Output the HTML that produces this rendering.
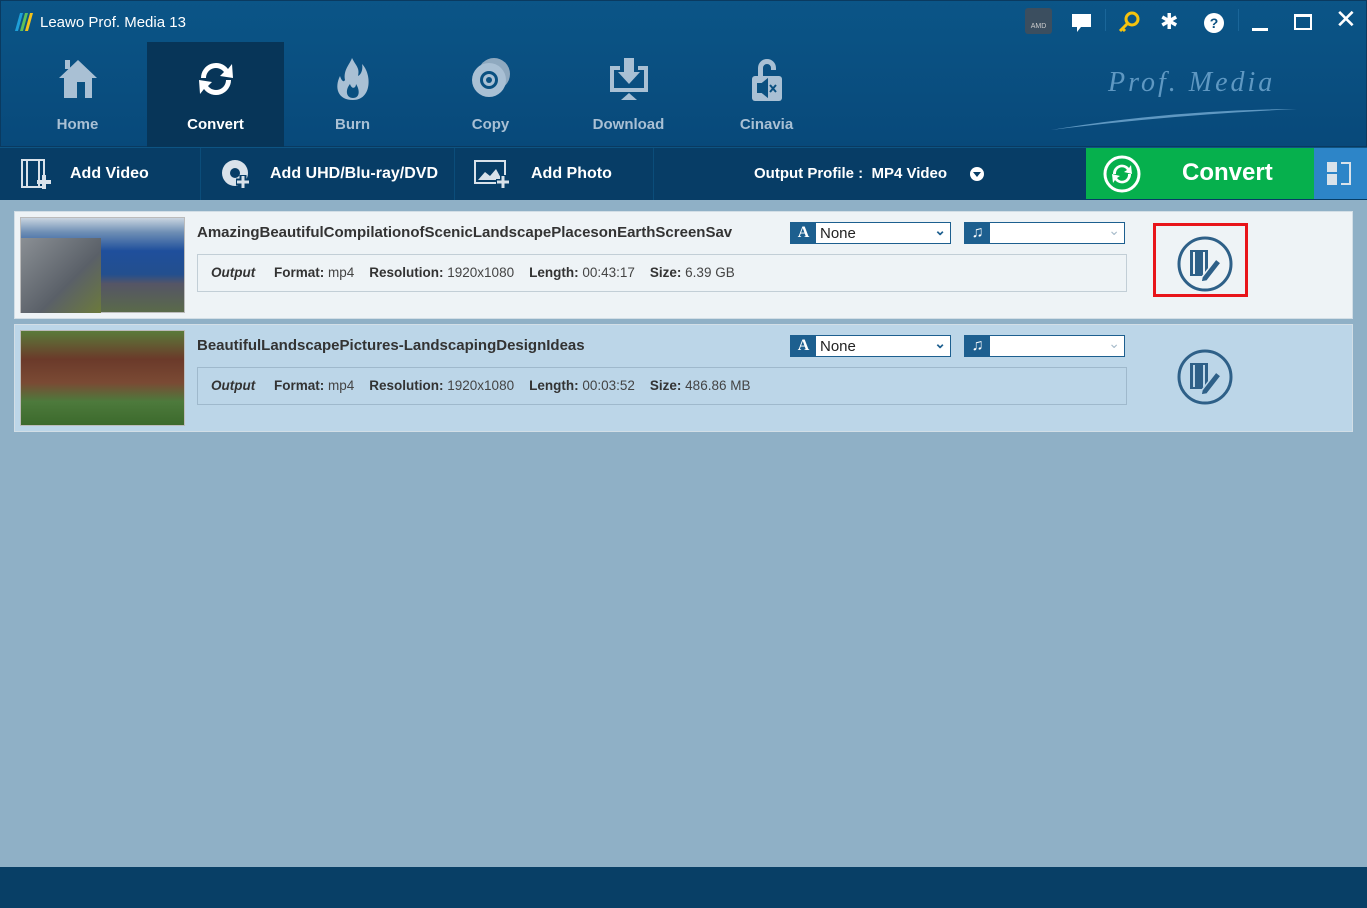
<!DOCTYPE html>
<html><head><meta charset="utf-8"><style>
*{margin:0;padding:0;box-sizing:border-box}
body{width:1367px;height:908px;overflow:hidden;font-family:"Liberation Sans",sans-serif;background:#8fb0c6;position:relative}
.hdr{position:absolute;left:0;top:0;width:1367px;height:147px;background:linear-gradient(#0b5587,#08497a);border:1px solid #0a3a60}
.title{position:absolute;left:39px;top:13px;color:#fff;font-size:15px}
.nav{position:absolute;top:41px;width:137px;height:106px;text-align:center;color:#a9c0d4;font-weight:bold;font-size:15px}
.nav .lbl{position:absolute;top:74px;width:100%}
.nav svg{position:absolute;left:46px;top:14px}
.nav.act{background:#073558;color:#fff}
.tb{position:absolute;left:0;top:147px;width:1367px;height:53px;background:#073d66;border-top:1px solid #0d5483}
.tbi{position:absolute;top:0;height:52px;color:#fff;font-weight:bold;font-size:16px;line-height:52px;border-right:1px solid #0b4d7a}
.conv{position:absolute;left:1086px;top:148px;width:228px;height:51px;background:#06b04d;color:#fff;font-size:24px;font-weight:bold}
.side{position:absolute;left:1314px;top:148px;width:53px;height:51px;background:#2d85c8}
.row{position:absolute;left:14px;width:1339px;height:108px;border:1px solid #d2dee6}
.thumb{position:absolute;left:5px;top:5px;width:165px;height:96px;border:1px solid #bbb}
.name{position:absolute;left:182px;top:12px;font-weight:bold;font-size:15px;color:#333}
.info{position:absolute;left:182px;top:42px;width:930px;height:38px;border:1px solid #c2ced6;font-size:13.5px;color:#444;line-height:36px;padding-left:13px}
.info b{color:#333}
.sel{position:absolute;top:10px;height:22px;border:1px solid #1d5f8f;background:#fff}
.sel .ic{position:absolute;left:0;top:0;width:25px;height:20px;background:#1d5f8f;color:#fff;font-weight:bold;text-align:center;font-family:"Liberation Serif",serif;font-size:16px;line-height:20px}
.ed{position:absolute;left:1161px;top:23px}
.foot{position:absolute;left:0;top:867px;width:1367px;height:41px;background:#083f66}
</style></head><body>
<div class="hdr">
 <svg style="position:absolute;left:12px;top:11px" width="22" height="20"><path d="M2 19 L7 1 L10 1 L5 19Z" fill="#1e9fd8"/><path d="M7 19 L12 1 L15 1 L10 19Z" fill="#5cc05a"/><path d="M12 19 L17 1 L20 1 L15 19Z" fill="#f3c21a"/></svg>
 <div class="title">Leawo Prof. Media 13</div>
 <div class="nav" style="left:8px"><svg width="46" height="46"><path d="M4 22 L23 4 L42 22 L37 22 L37 42 L9 42 L9 22Z" fill="#a9c0d4"/><rect x="22" y="26" width="8" height="16" fill="#0a5080"/><rect x="10" y="4" width="5" height="9" fill="#a9c0d4"/></svg><div class="lbl">Home</div></div>
 <div class="nav act" style="left:146px"><svg width="46" height="46"><path d="M8 22 A15 15 0 0 1 35 13 L39 8 L40 22 L27 20 L31 16 A10 10 0 0 0 13 22Z M38 24 A15 15 0 0 1 11 33 L7 38 L6 24 L19 26 L15 30 A10 10 0 0 0 33 24Z" fill="#fff"/></svg><div class="lbl">Convert</div></div>
 <div class="nav" style="left:283px"><svg width="46" height="46"><path d="M23 44 C8 44 4 32 10 20 C12 26 14 26 15 24 C13 14 20 8 22 2 C26 10 30 12 28 20 C32 18 33 12 32 8 C42 18 42 44 23 44Z" fill="#a9c0d4"/><path d="M23 42 C16 42 15 34 20 28 C22 34 26 32 26 28 C30 34 30 42 23 42Z" fill="#0a5080"/></svg><div class="lbl">Burn</div></div>
 <div class="nav" style="left:421px"><svg width="46" height="46"><circle cx="26" cy="18" r="16" fill="#8fa9bf"/><circle cx="21" cy="24" r="17" fill="#a9c0d4"/><circle cx="21" cy="24" r="9" fill="#0a5080"/><circle cx="21" cy="24" r="6" fill="#a9c0d4"/><circle cx="21" cy="24" r="3" fill="#0a5080"/></svg><div class="lbl">Copy</div></div>
 <div class="nav" style="left:559px"><svg width="46" height="46"><path d="M4 10 L14 10 L14 14 L8 14 L8 32 L38 32 L38 14 L32 14 L32 10 L42 10 L42 36 L4 36Z" fill="#a9c0d4"/><path d="M18 2 L28 2 L28 16 L34 16 L23 28 L12 16 L18 16Z" fill="#a9c0d4"/><path d="M15 44 L23 37 L31 44Z" fill="#a9c0d4"/></svg><div class="lbl">Download</div></div>
 <div class="nav" style="left:697px"><svg width="46" height="46"><path d="M14 20 L14 12 A9 9 0 0 1 32 12 L32 14 L27 14 L27 12 A4 4 0 0 0 19 12 L19 20Z" fill="#a9c0d4"/><rect x="8" y="20" width="30" height="25" rx="3" fill="#a9c0d4"/><path d="M14 28 L18 28 L23 24 L23 40 L18 36 L14 36Z M26 29 L32 36 M32 29 L26 36" fill="#0a5080" stroke="#0a5080" stroke-width="2"/></svg><div class="lbl">Cinavia</div></div>
 <div style="position:absolute;left:1107px;top:66px;color:#5f98c2;font-family:'Liberation Serif',serif;font-style:italic;font-size:28px;letter-spacing:3px">Prof. Media</div>
 <svg style="position:absolute;left:1048px;top:104px" width="250" height="30"><path d="M2 25 Q120 5 248 4 Q120 10 2 25Z" fill="#5f98c2"/></svg>
 <div style="position:absolute;left:1024px;top:7px;width:27px;height:26px;background:#3b4e5f;border-radius:3px;color:#ccc;font-size:7px;text-align:center;padding-top:15px">AMD</div>
 <svg style="position:absolute;left:1070px;top:12px" width="22" height="20"><path d="M1 1 H20 V14 H10 L6 19 V14 H1Z" fill="#fff"/></svg>
 <div style="position:absolute;left:1104px;top:8px;width:1px;height:22px;background:#1a6699"></div>
 <svg style="position:absolute;left:1116px;top:10px" width="24" height="22"><circle cx="15" cy="8" r="6" fill="none" stroke="#f5c30e" stroke-width="3"/><path d="M11 12 L3 20 M5 17 L8 20" stroke="#f5c30e" stroke-width="3"/></svg>
 <div style="position:absolute;left:1159px;top:8px;color:#fff;font-size:22px">✱</div>
 <svg style="position:absolute;left:1203px;top:12px" width="20" height="20"><circle cx="10" cy="10" r="10" fill="#fff"/><text x="10" y="15" text-anchor="middle" font-size="14" font-weight="bold" fill="#0a5080" font-family="Liberation Sans">?</text></svg>
 <div style="position:absolute;left:1237px;top:8px;width:1px;height:22px;background:#1a6699"></div>
 <div style="position:absolute;left:1251px;top:27px;width:16px;height:3px;background:#fff"></div>
 <div style="position:absolute;left:1293px;top:13px;width:18px;height:16px;border:2px solid #fff;border-top-width:3px"></div>
 <div style="position:absolute;left:1334px;top:3px;color:#fff;font-size:26px">✕</div>
</div>
<div class="tb">
 <div class="tbi" style="left:0;width:201px;padding-left:70px">Add Video</div>
 <svg style="position:absolute;left:21px;top:11px" width="30" height="30"><rect x="1" y="1" width="22" height="27" fill="none" stroke="#d9e2ea" stroke-width="2"/><path d="M6 1V28 M18 1V28" stroke="#d9e2ea" stroke-width="2"/><path d="M16 23H30M23 16V30" stroke="#d9e2ea" stroke-width="4"/></svg>
 <div class="tbi" style="left:201px;width:254px;padding-left:69px">Add UHD/Blu-ray/DVD</div>
 <svg style="position:absolute;left:221px;top:11px" width="30" height="30"><circle cx="14" cy="14" r="13" fill="#d9e2ea"/><circle cx="14" cy="14" r="5" fill="#073d66"/><path d="M15 23H29M22 16V30" stroke="#073d66" stroke-width="7"/><path d="M16 23H28M22 17V29" stroke="#d9e2ea" stroke-width="3"/></svg>
 <div class="tbi" style="left:455px;width:199px;padding-left:76px">Add Photo</div>
 <svg style="position:absolute;left:474px;top:12px" width="36" height="28"><rect x="1" y="1" width="30" height="22" fill="none" stroke="#d9e2ea" stroke-width="2"/><path d="M4 20 L11 12 L16 16 L22 9 L28 20Z" fill="#d9e2ea"/><path d="M22 22H36M29 15V28" stroke="#073d66" stroke-width="6"/><path d="M23 22H35M29 16V28" stroke="#d9e2ea" stroke-width="3"/></svg>
 <div style="position:absolute;left:754px;top:0;line-height:52px;color:#fff;font-weight:bold;font-size:15px">Output Profile :&nbsp; MP4 Video</div>
 <svg style="position:absolute;left:970px;top:19px" width="14" height="14"><circle cx="7" cy="7" r="7" fill="#fff"/><path d="M3 5H11L7 10Z" fill="#073d66"/></svg>
</div>
<div class="conv"><svg style="position:absolute;left:17px;top:7px" width="38" height="38"><circle cx="19" cy="19" r="17" fill="none" stroke="#fff" stroke-width="3"/><path d="M10 19 A9 9 0 0 1 26 13 L28 10 L29 19 L21 17 L24 15 A6 6 0 0 0 13 19Z M28 19 A9 9 0 0 1 12 25 L10 28 L9 19 L17 21 L14 23 A6 6 0 0 0 25 19Z" fill="#fff"/></svg><span style="position:absolute;left:96px;top:11px">Convert</span></div>
<div class="side"><div style="position:absolute;left:13px;top:14px;width:10px;height:10px;background:#d9e2ea"></div><div style="position:absolute;left:13px;top:26px;width:10px;height:11px;background:#d9e2ea"></div><div style="position:absolute;left:27px;top:14px;width:10px;height:23px;border:2px solid #d9e2ea;border-left:none"></div></div>

<div class="row" style="top:211px;background:#eef3f6">
 <div class="thumb" style="background:linear-gradient(180deg,#c9d5e0 0%,#6f8fb5 15%,#1f4f9c 35%,#234f8e 60%,#556 70%,#5a6a4a 100%)"><div style="position:absolute;left:0;top:20px;width:80px;height:75px;background:linear-gradient(135deg,#8a8f94,#5a6068 60%,#6c7a3c)"></div></div>
 <div class="name">AmazingBeautifulCompilationofScenicLandscapePlacesonEarthScreenSav</div>
 <div class="info"><b><i>Output</i></b>&nbsp;&nbsp;&nbsp;&nbsp; <b>Format:</b> mp4&nbsp;&nbsp;&nbsp; <b>Resolution:</b> 1920x1080&nbsp;&nbsp;&nbsp; <b>Length:</b> 00:43:17&nbsp;&nbsp;&nbsp; <b>Size:</b> 6.39 GB</div>
 <div class="sel" style="left:775px;width:161px"><div class="ic">A</div><span style="position:absolute;left:29px;top:2px;font-size:15px;color:#222">None</span><span style="position:absolute;right:4px;top:-1px;color:#1d5f8f;font-size:14px;font-weight:bold">⌄</span></div>
 <div class="sel" style="left:949px;width:161px"><div class="ic">♫</div><span style="position:absolute;right:4px;top:-1px;color:#a8bccb;font-size:14px">⌄</span></div>
 <div style="position:absolute;left:1138px;top:11px;width:95px;height:74px;border:3px solid #e8141a"></div>
 <svg class="ed" width="58" height="58"><circle cx="29" cy="29" r="26" fill="none" stroke="#2e6088" stroke-width="3"/><rect x="14" y="15" width="18" height="26" fill="#2e6088"/><path d="M18 17v22M28 17v22" stroke="#eef3f6" stroke-width="2"/><path d="M26 42 L40 24 L45 28 L31 46 L25 47Z" fill="#2e6088" stroke="#eef3f6" stroke-width="1.5"/></svg>
</div>
<div class="row" style="top:324px;background:#bcd6e8">
 <div class="thumb" style="background:linear-gradient(180deg,#5a7a3a,#6b3a2a 30%,#7a4a34 55%,#4d7a3c 75%,#3c6a2c)"></div>
 <div class="name">BeautifulLandscapePictures-LandscapingDesignIdeas</div>
 <div class="info" style="border-color:#9fb9cc"><b><i>Output</i></b>&nbsp;&nbsp;&nbsp;&nbsp; <b>Format:</b> mp4&nbsp;&nbsp;&nbsp; <b>Resolution:</b> 1920x1080&nbsp;&nbsp;&nbsp; <b>Length:</b> 00:03:52&nbsp;&nbsp;&nbsp; <b>Size:</b> 486.86 MB</div>
 <div class="sel" style="left:775px;width:161px"><div class="ic">A</div><span style="position:absolute;left:29px;top:2px;font-size:15px;color:#222">None</span><span style="position:absolute;right:4px;top:-1px;color:#1d5f8f;font-size:14px;font-weight:bold">⌄</span></div>
 <div class="sel" style="left:949px;width:161px"><div class="ic">♫</div><span style="position:absolute;right:4px;top:-1px;color:#a8bccb;font-size:14px">⌄</span></div>
 <svg class="ed" width="58" height="58"><circle cx="29" cy="29" r="26" fill="none" stroke="#2e6088" stroke-width="3"/><rect x="14" y="15" width="18" height="26" fill="#2e6088"/><path d="M18 17v22M28 17v22" stroke="#bcd6e8" stroke-width="2"/><path d="M26 42 L40 24 L45 28 L31 46 L25 47Z" fill="#2e6088" stroke="#bcd6e8" stroke-width="1.5"/></svg>
</div>
<div class="foot"></div>
</body></html>
